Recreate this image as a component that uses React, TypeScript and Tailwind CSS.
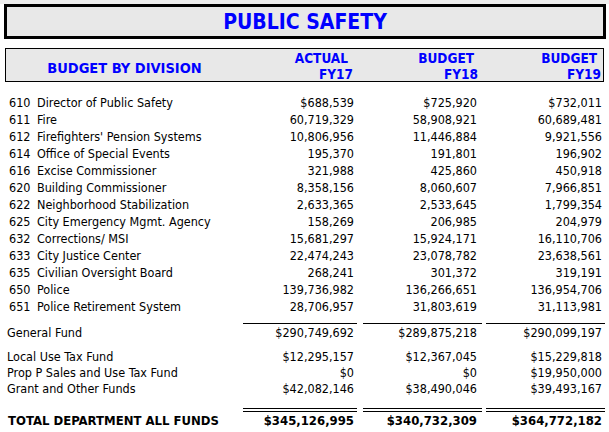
const rows: [string, string, string, string, string][] = [
  ["610", "Director of Public Safety", "$688,539", "$725,920", "$732,011"],
  ["611", "Fire", "60,719,329", "58,908,921", "60,689,481"],
  ["612", "Firefighters' Pension Systems", "10,806,956", "11,446,884", "9,921,556"],
  ["614", "Office of Special Events", "195,370", "191,801", "196,902"],
  ["616", "Excise Commissioner", "321,988", "425,860", "450,918"],
  ["620", "Building Commissioner", "8,358,156", "8,060,607", "7,966,851"],
  ["622", "Neighborhood Stabilization", "2,633,365", "2,533,645", "1,799,354"],
  ["625", "City Emergency Mgmt. Agency", "158,269", "206,985", "204,979"],
  ["632", "Corrections/ MSI", "15,681,297", "15,924,171", "16,110,706"],
  ["633", "City Justice Center", "22,474,243", "23,078,782", "23,638,561"],
  ["635", "Civilian Oversight Board", "268,241", "301,372", "319,191"],
  ["650", "Police", "139,736,982", "136,266,651", "136,954,706"],
  ["651", "Police Retirement System", "28,706,957", "31,803,619", "31,113,981"],
];

const funds: [string, string, string, string][] = [
  ["Local Use Tax Fund", "$12,295,157", "$12,367,045", "$15,229,818"],
  ["Prop P Sales and Use Tax Fund", "$0", "$0", "$19,950,000"],
  ["Grant and Other Funds", "$42,082,146", "$38,490,046", "$39,493,167"],
];

const grid = "grid grid-cols-[243px_117px_124px_122px]";

function Nums({ v }: { v: string[] }) {
  return (
    <>
      <div className="pr-[6px] text-right">{v[0]}</div>
      <div className="pr-[7px] text-right">{v[1]}</div>
      <div className="pr-[4px] text-right">{v[2]}</div>
    </>
  );
}

function Rule({ double }: { double?: boolean }) {
  const cls = double ? "h-[4px] border-y border-black" : "h-[1px] bg-black";
  return (
    <div className={grid}>
      <div />
      <div className={`${cls} mr-[3px]`} />
      <div className={`${cls} ml-[3px] mr-[2px]`} />
      <div className={`${cls} ml-[2px] mr-[1px]`} />
    </div>
  );
}

export default function App() {
  return (
    <div className="h-[432px] w-[609px] overflow-hidden bg-white font-['DejaVu_Sans',sans-serif] font-stretch-condensed text-[12.5px] text-black">
      <div className="h-[4px] bg-[#eeeeee]" />
      <div className="ml-[4px] flex h-[35px] w-[602px] items-center justify-center border-[3px] border-black bg-[#e8e8e8] pt-[3px] text-[21px] font-bold text-[#0000ff]">
        PUBLIC SAFETY
      </div>

      <div className="ml-[5px] mt-[9px] grid h-[34px] w-[599px] grid-cols-[237px_117px_124px_119px] border border-black bg-[#e8e8e8] text-[13.5px] font-bold leading-[16px] text-[#0000ff]">
        <div className="flex items-center justify-center pt-[4px] text-[14.5px]">BUDGET BY DIVISION</div>
        <div className="pt-[1px] text-right">
          <div className="pr-[12px]">ACTUAL</div>
          <div className="pr-[7px]">FY17</div>
        </div>
        <div className="pt-[1px] text-right">
          <div className="pr-[10px]">BUDGET</div>
          <div className="pr-[6px]">FY18</div>
        </div>
        <div className="pt-[1px] text-right">
          <div className="pr-[6px]">BUDGET</div>
          <div className="pr-[2px]">FY19</div>
        </div>
      </div>

      <div className="mt-[12px] leading-[17px]">
        {rows.map((r) => (
          <div key={r[0]} className={grid}>
            <div className="flex pl-[9px]">
              <span className="w-[28px]">{r[0]}</span>
              <span>{r[1]}</span>
            </div>
            <Nums v={r.slice(2)} />
          </div>
        ))}
      </div>

      <div className="mt-[8px]">
        <Rule />
      </div>
      <div className={`${grid} leading-[17px]`}>
        <div className="pl-[7px]">General Fund</div>
        <Nums v={["$290,749,692", "$289,875,218", "$290,099,197"]} />
      </div>

      <div className="mt-[8px] leading-[16px]">
        {funds.map((f) => (
          <div key={f[0]} className={grid}>
            <div className="pl-[7px]">{f[0]}</div>
            <Nums v={f.slice(1)} />
          </div>
        ))}
      </div>

      <div className="mt-[11px]">
        <Rule double />
      </div>
      <div className={`${grid} text-[13px] font-bold leading-[17px]`}>
        <div className="pl-[8px]">TOTAL DEPARTMENT ALL FUNDS</div>
        <Nums v={["$345,126,995", "$340,732,309", "$364,772,182"]} />
      </div>
    </div>
  );
}
